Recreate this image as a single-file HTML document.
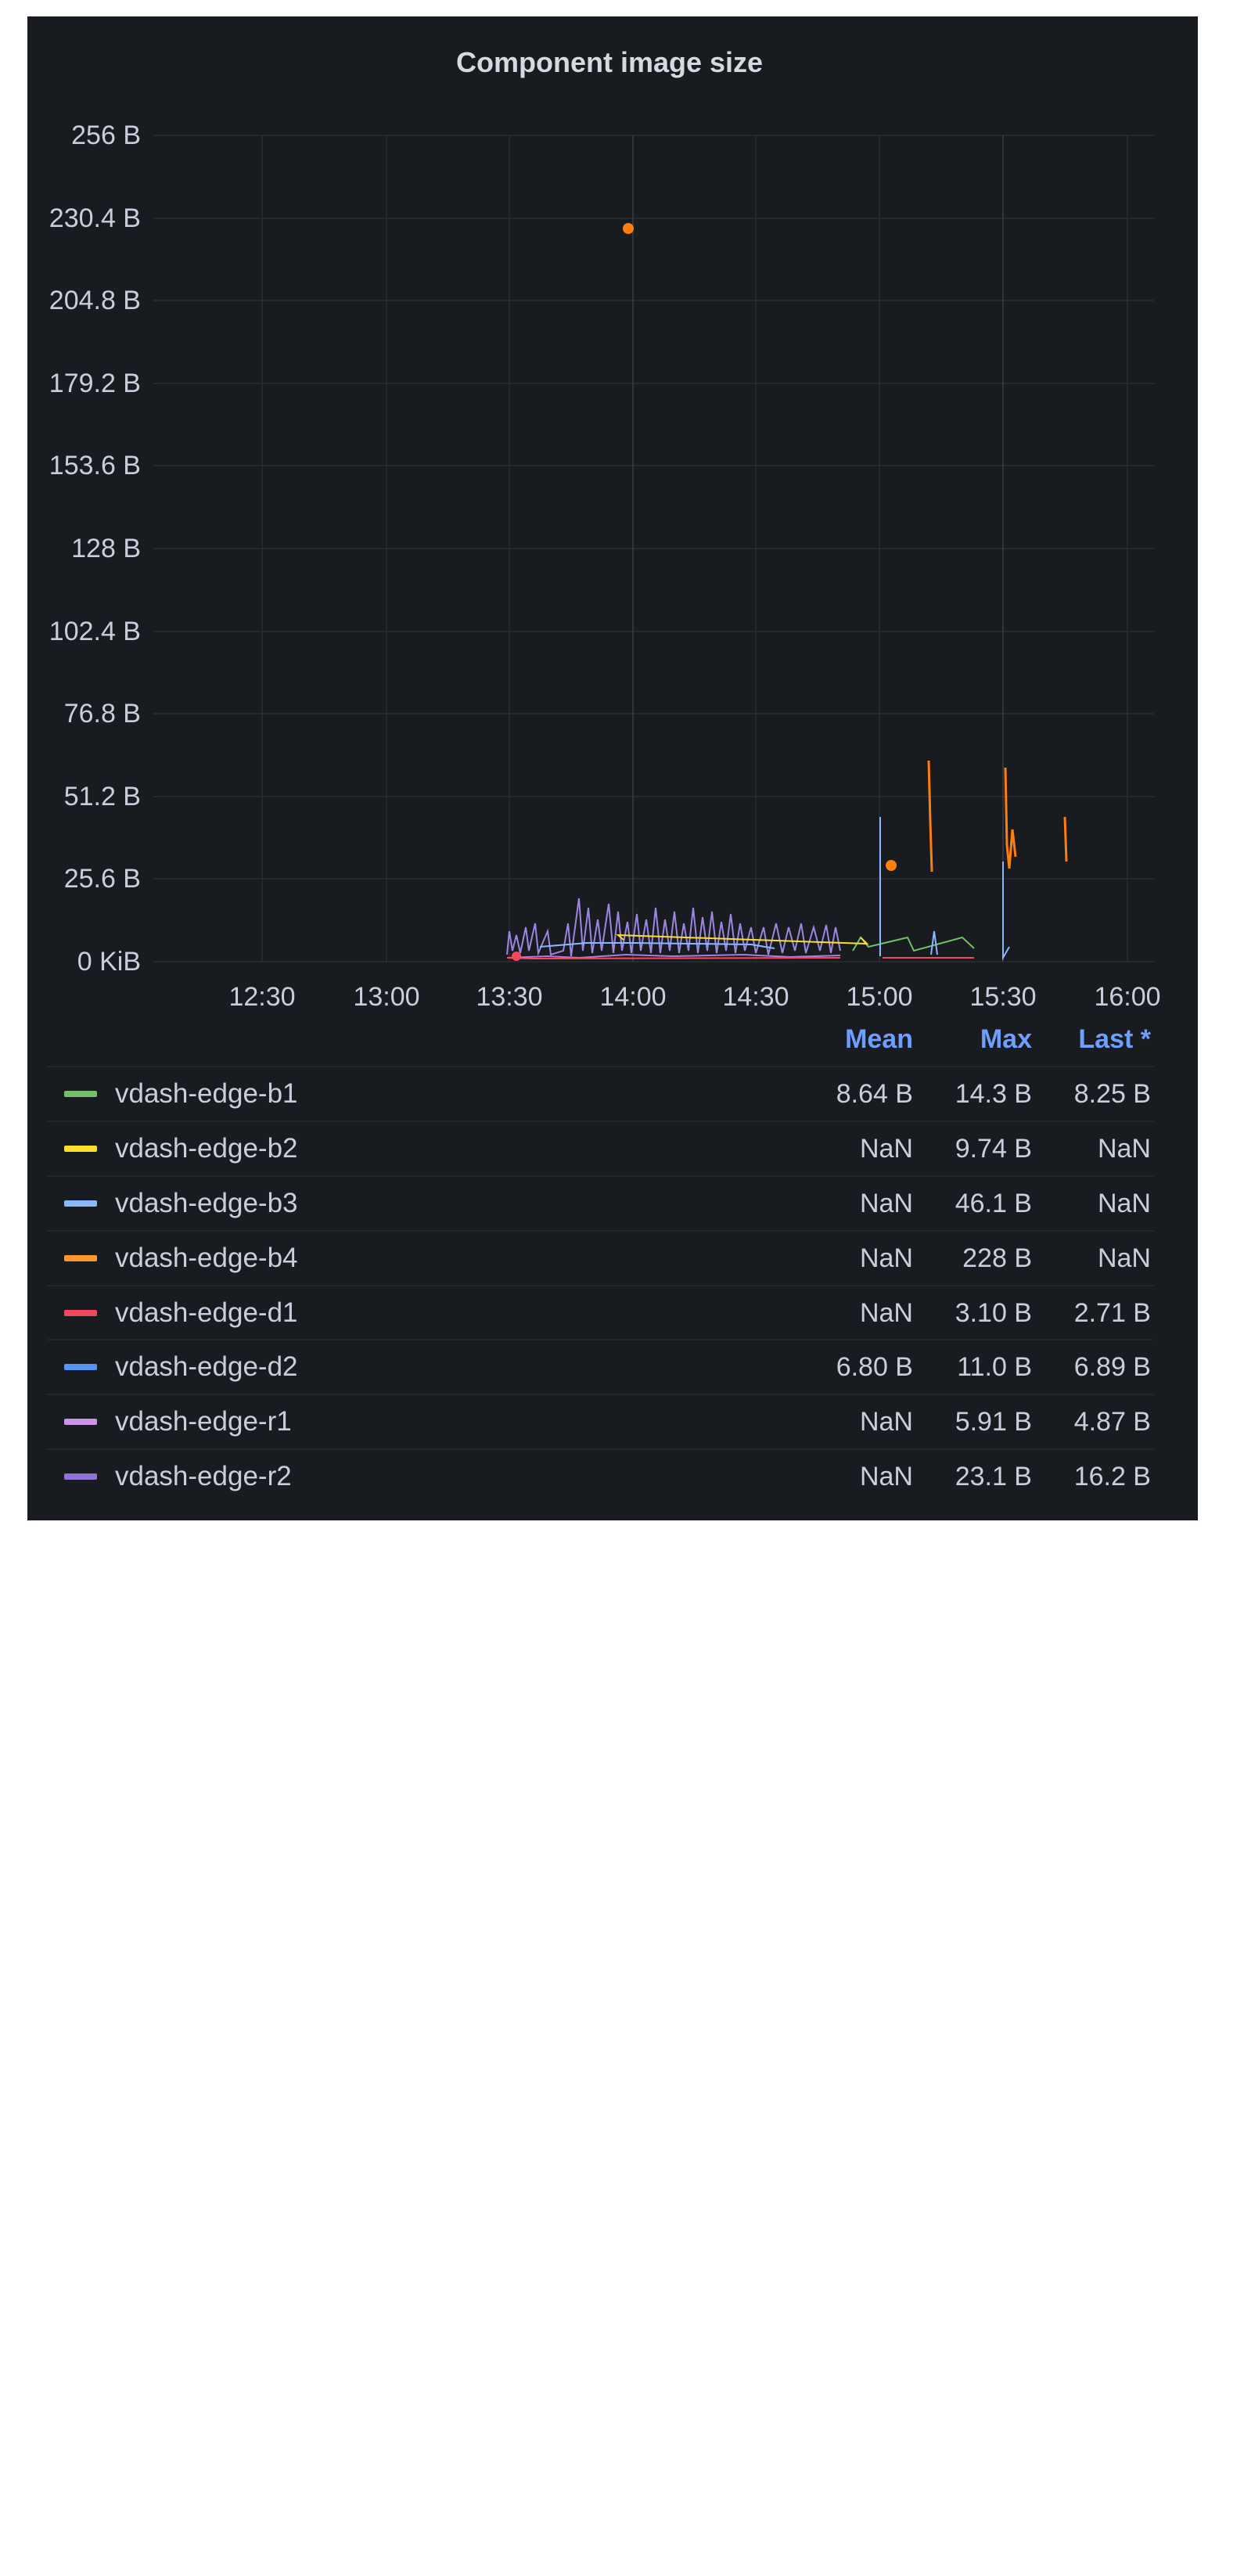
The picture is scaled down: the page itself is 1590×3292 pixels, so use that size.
<!DOCTYPE html>
<html><head><meta charset="utf-8"><style>
html,body{margin:0;padding:0;background:#fff;}
body{width:1590px;height:1984px;position:relative;overflow:hidden;font-family:"Liberation Sans",sans-serif;}
#p{position:absolute;left:35px;top:21px;width:1496px;height:1922px;background:#181b1f;}
.t{position:absolute;color:#ccccdc;white-space:nowrap;line-height:40px;}
.box{position:absolute;left:0;top:0;width:1590px;height:1984px;}
</style></head><body>
<div id="p"></div>
<svg width="1590" height="1984" style="position:absolute;left:0;top:0">
<g stroke="#2a2d33" stroke-width="1.5">
<line x1="196" y1="173" x2="1475" y2="173"/><line x1="196" y1="279" x2="1475" y2="279"/>
<line x1="196" y1="384" x2="1475" y2="384"/><line x1="196" y1="490" x2="1475" y2="490"/>
<line x1="196" y1="595" x2="1475" y2="595"/><line x1="196" y1="701" x2="1475" y2="701"/>
<line x1="196" y1="807" x2="1475" y2="807"/><line x1="196" y1="912" x2="1475" y2="912"/>
<line x1="196" y1="1018" x2="1475" y2="1018"/><line x1="196" y1="1123" x2="1475" y2="1123"/>
<line x1="196" y1="1229" x2="1475" y2="1229"/>
<line x1="335" y1="173" x2="335" y2="1229"/><line x1="494" y1="173" x2="494" y2="1229"/>
<line x1="651" y1="173" x2="651" y2="1229"/><line x1="809" y1="173" x2="809" y2="1229" stroke="#3a3d43"/>
<line x1="966" y1="173" x2="966" y2="1229"/><line x1="1124" y1="173" x2="1124" y2="1229"/>
<line x1="1282" y1="173" x2="1282" y2="1229" stroke="#3a3d43"/><line x1="1441" y1="173" x2="1441" y2="1229"/>
</g>
<g stroke="#262930" stroke-width="1.5">
<line x1="60" y1="1363" x2="1475" y2="1363"/><line x1="60" y1="1433" x2="1475" y2="1433"/>
<line x1="60" y1="1503" x2="1475" y2="1503"/><line x1="60" y1="1573" x2="1475" y2="1573"/>
<line x1="60" y1="1643" x2="1475" y2="1643"/><line x1="60" y1="1712" x2="1475" y2="1712"/>
<line x1="60" y1="1782" x2="1475" y2="1782"/><line x1="60" y1="1852" x2="1475" y2="1852"/>
</g>
<g fill="none" stroke-width="2">
<polyline stroke="#9d86e0" points="648,1220 651,1190 655,1215 660,1195 665,1218 672,1185 676,1215 684,1180 688,1218 700,1190 704,1220 720,1215 726,1180 730,1222 740,1148 745,1215 752,1160 757,1218 764,1175 769,1215 778,1155 784,1218 790,1165 795,1215 802,1178 807,1218 814,1168 819,1215 826,1175 832,1218 838,1160 844,1218 850,1175 856,1215 862,1165 868,1218 874,1180 880,1215 886,1160 892,1218 898,1172 904,1215 910,1165 916,1218 922,1178 928,1215 934,1168 940,1218 946,1180 952,1215 960,1185 966,1218 976,1185 982,1220 992,1180 1000,1218 1008,1185 1016,1215 1024,1180 1030,1218 1040,1185 1048,1215 1056,1182 1062,1218 1068,1185 1074,1215"/>
<polyline stroke="#b877d9" points="648,1224 700,1222 740,1224 800,1220 860,1222 950,1220 1010,1223 1074,1221"/>
<polyline stroke="#73bf69" points="1090,1215 1100,1198 1110,1210 1160,1198 1168,1215 1230,1198 1245,1212"/>
<polyline stroke="#fade2a" points="1100,1198 1108,1206 790,1195 797,1201"/>
<polyline stroke="#8ab8ff" points="690,1210 750,1205 810,1205 960,1207 990,1212"/>
<polyline stroke="#8ab8ff" points="1125,1044 1125,1222"/>
<polyline stroke="#8ab8ff" points="1282,1101 1282,1224 1290,1210"/>
<polyline stroke="#8ab8ff" points="1190,1220 1194,1190 1198,1220"/>
<polyline stroke="#ff7f0e" stroke-width="3" points="1187,972 1189,1050 1191,1114"/>
<polyline stroke="#ff7f0e" stroke-width="3" points="1285,981 1287,1080 1290,1110 1294,1060 1298,1095"/>
<polyline stroke="#ff7f0e" stroke-width="3" points="1361,1044 1363,1101"/>
<polyline stroke="#f2495c" points="648,1224 680,1225 1074,1224"/>
<polyline stroke="#f2495c" points="1128,1224 1160,1224 1200,1224 1245,1224"/>
</g>
<circle cx="803" cy="292" r="7" fill="#ff7f0e"/>
<circle cx="1139" cy="1106" r="7" fill="#ff7f0e"/>
<circle cx="660" cy="1222" r="6" fill="#f2495c"/>
<rect x="82" y="1394" width="42" height="8" rx="2" fill="#73bf69"/>
<rect x="82" y="1464" width="42" height="8" rx="2" fill="#fade2a"/>
<rect x="82" y="1534" width="42" height="8" rx="2" fill="#8ab8ff"/>
<rect x="82" y="1604" width="42" height="8" rx="2" fill="#ff9830"/>
<rect x="82" y="1674" width="42" height="8" rx="2" fill="#f2495c"/>
<rect x="82" y="1743" width="42" height="8" rx="2" fill="#5794f2"/>
<rect x="82" y="1813" width="42" height="8" rx="2" fill="#ca95e5"/>
<rect x="82" y="1883" width="42" height="8" rx="2" fill="#8f74d6"/>
</svg>
<div class="t" style="left:479px;width:600px;text-align:center;top:60px;font-size:36px;font-weight:bold;color:#d8d9e0">Component image size</div>
<div class="box" style="font-size:34px">
<div class="t" style="right:1410px;top:153px">256 B</div>
<div class="t" style="right:1410px;top:259px">230.4 B</div>
<div class="t" style="right:1410px;top:364px">204.8 B</div>
<div class="t" style="right:1410px;top:470px">179.2 B</div>
<div class="t" style="right:1410px;top:575px">153.6 B</div>
<div class="t" style="right:1410px;top:681px">128 B</div>
<div class="t" style="right:1410px;top:787px">102.4 B</div>
<div class="t" style="right:1410px;top:892px">76.8 B</div>
<div class="t" style="right:1410px;top:998px">51.2 B</div>
<div class="t" style="right:1410px;top:1103px">25.6 B</div>
<div class="t" style="right:1410px;top:1209px">0 KiB</div>
</div>
<div class="box" style="font-size:34px;top:1254px">
<div class="t" style="left:275px;width:120px;text-align:center">12:30</div>
<div class="t" style="left:434px;width:120px;text-align:center">13:00</div>
<div class="t" style="left:591px;width:120px;text-align:center">13:30</div>
<div class="t" style="left:749px;width:120px;text-align:center">14:00</div>
<div class="t" style="left:906px;width:120px;text-align:center">14:30</div>
<div class="t" style="left:1064px;width:120px;text-align:center">15:00</div>
<div class="t" style="left:1222px;width:120px;text-align:center">15:30</div>
<div class="t" style="left:1381px;width:120px;text-align:center">16:00</div>
</div>
<div class="box" style="font-size:34px;font-weight:bold;top:1308px">
<div class="t" style="right:423px;color:#6e9fff">Mean</div>
<div class="t" style="right:271px;color:#6e9fff">Max</div>
<div class="t" style="right:119px;color:#6e9fff">Last *</div>
</div>
<div class="box" style="font-size:35px">
<div class="t" style="left:147px;top:1378px">vdash-edge-b1</div>
<div class="t" style="left:147px;top:1448px">vdash-edge-b2</div>
<div class="t" style="left:147px;top:1518px">vdash-edge-b3</div>
<div class="t" style="left:147px;top:1588px">vdash-edge-b4</div>
<div class="t" style="left:147px;top:1658px">vdash-edge-d1</div>
<div class="t" style="left:147px;top:1727px">vdash-edge-d2</div>
<div class="t" style="left:147px;top:1797px">vdash-edge-r1</div>
<div class="t" style="left:147px;top:1867px">vdash-edge-r2</div>
</div>
<div class="box" style="font-size:34px">
<div class="t" style="right:423px;top:1378px">8.64 B</div><div class="t" style="right:271px;top:1378px">14.3 B</div><div class="t" style="right:119px;top:1378px">8.25 B</div>
<div class="t" style="right:423px;top:1448px">NaN</div><div class="t" style="right:271px;top:1448px">9.74 B</div><div class="t" style="right:119px;top:1448px">NaN</div>
<div class="t" style="right:423px;top:1518px">NaN</div><div class="t" style="right:271px;top:1518px">46.1 B</div><div class="t" style="right:119px;top:1518px">NaN</div>
<div class="t" style="right:423px;top:1588px">NaN</div><div class="t" style="right:271px;top:1588px">228 B</div><div class="t" style="right:119px;top:1588px">NaN</div>
<div class="t" style="right:423px;top:1658px">NaN</div><div class="t" style="right:271px;top:1658px">3.10 B</div><div class="t" style="right:119px;top:1658px">2.71 B</div>
<div class="t" style="right:423px;top:1727px">6.80 B</div><div class="t" style="right:271px;top:1727px">11.0 B</div><div class="t" style="right:119px;top:1727px">6.89 B</div>
<div class="t" style="right:423px;top:1797px">NaN</div><div class="t" style="right:271px;top:1797px">5.91 B</div><div class="t" style="right:119px;top:1797px">4.87 B</div>
<div class="t" style="right:423px;top:1867px">NaN</div><div class="t" style="right:271px;top:1867px">23.1 B</div><div class="t" style="right:119px;top:1867px">16.2 B</div>
</div>
</body></html>
